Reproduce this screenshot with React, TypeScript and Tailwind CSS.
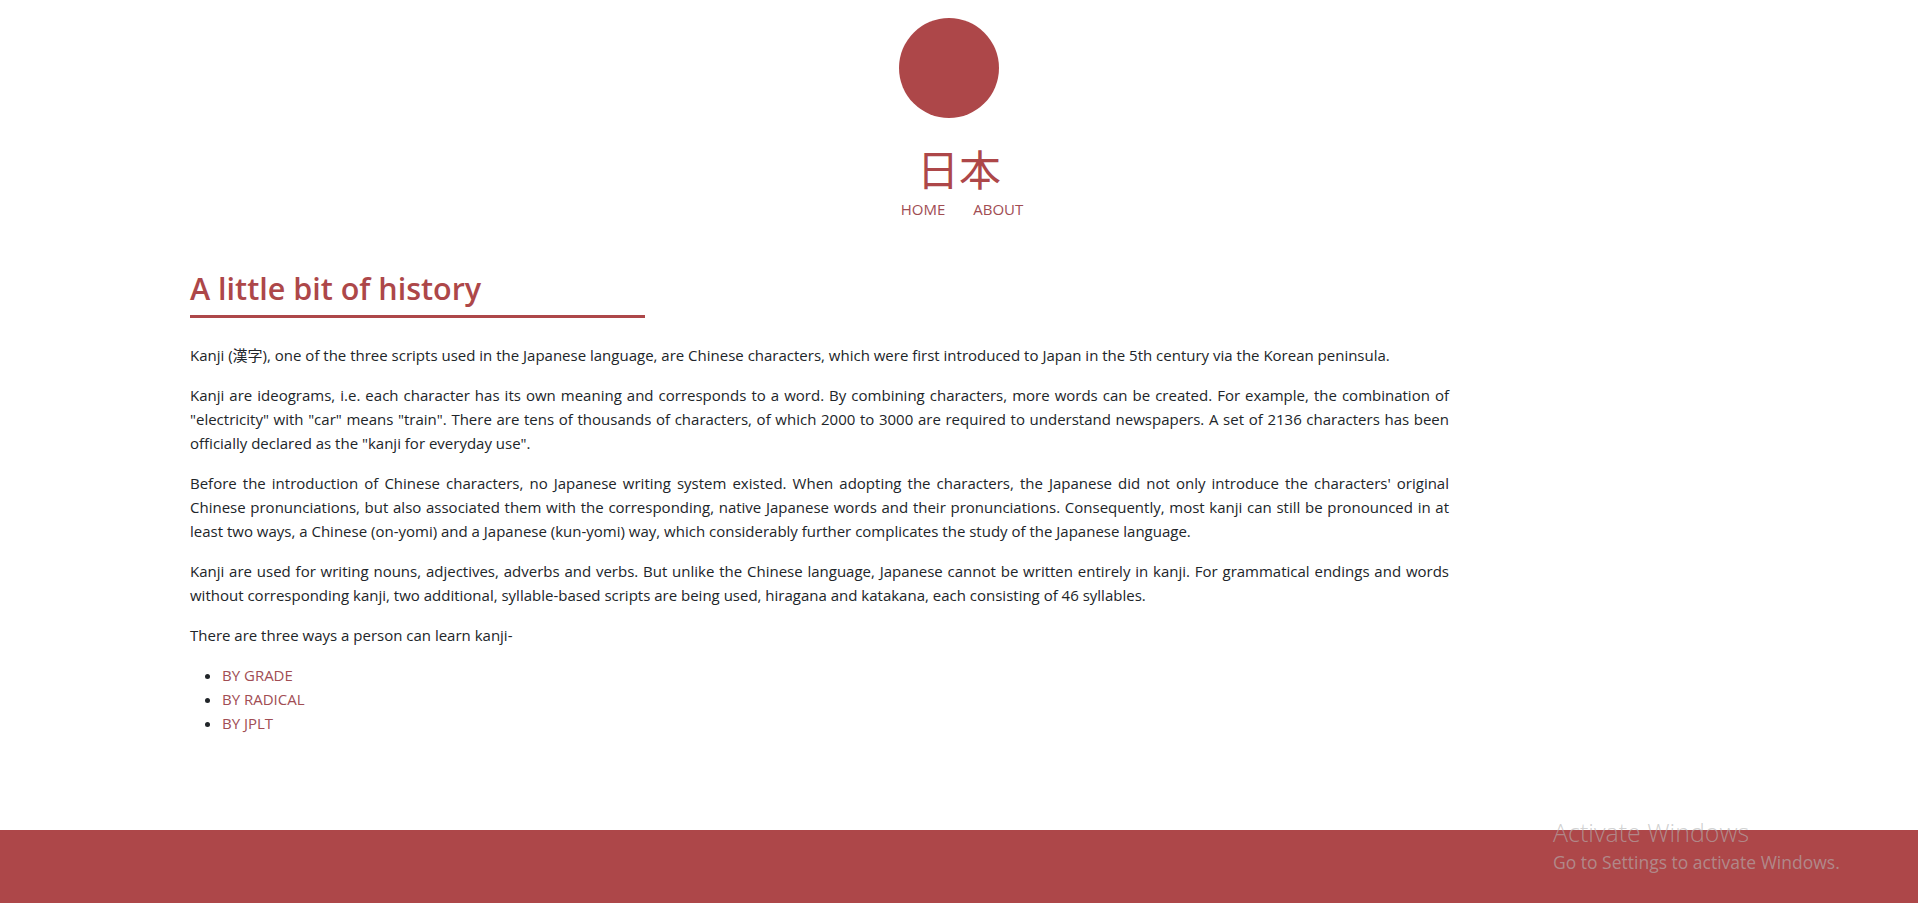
import React from "react";

const font = { fontFamily: '"Open Sans", "Noto Sans CJK JP", sans-serif' };

export default function App() {
  return (
    <div className="relative min-h-[903px] bg-white flex flex-col text-[#212529]" style={font}>
      <header className="flex flex-col items-center pt-[18px]">
        <div className="w-[100px] h-[100px] rounded-full bg-[#ad4749] mr-[20px]" />
        <h1 className="mt-[26px] text-[42px] leading-[48px] text-[#ad4749] font-normal" style={{ fontFamily: '"Noto Sans CJK JP", sans-serif' }}>
          日本
        </h1>
        <nav className="flex gap-[28px] text-[15px] leading-[20px] text-[#a14d53] mt-[7px] ml-[6px]">
          <a href="#">HOME</a>
          <a href="#">ABOUT</a>
        </nav>
      </header>

      <main className="ml-[190px] w-[1259px] mt-[49px] flex-1">
        <h2 className="text-[30.5px] leading-[40px] font-semibold text-[#ad4749]">A little bit of history</h2>
        <div className="w-[455px] border-b-[3px] border-[#ad4749] mt-[7px]" />
        <div className="mt-[25px] text-[15px] leading-6 text-justify flex flex-col gap-4">
          <p>
            Kanji (漢字), one of the three scripts used in the Japanese language, are Chinese characters, which were first introduced to Japan in the 5th century via the Korean peninsula.
          </p>
          <p>
            Kanji are ideograms, i.e. each character has its own meaning and corresponds to a word. By combining characters, more words can be created. For example, the combination of "electricity" with "car" means "train". There are tens of thousands of characters, of which 2000 to 3000 are required to understand newspapers. A set of 2136 characters has been officially declared as the "kanji for everyday use".
          </p>
          <p>
            Before the introduction of Chinese characters, no Japanese writing system existed. When adopting the characters, the Japanese did not only introduce the characters' original Chinese pronunciations, but also associated them with the corresponding, native Japanese words and their pronunciations. Consequently, most kanji can still be pronounced in at least two ways, a Chinese (on-yomi) and a Japanese (kun-yomi) way, which considerably further complicates the study of the Japanese language.
          </p>
          <p>
            Kanji are used for writing nouns, adjectives, adverbs and verbs. But unlike the Chinese language, Japanese cannot be written entirely in kanji. For grammatical endings and words without corresponding kanji, two additional, syllable-based scripts are being used, hiragana and katakana, each consisting of 46 syllables.
          </p>
          <p>There are three ways a person can learn kanji-</p>
          <ul className="list-disc pl-[32px] text-[#a14d53]">
            <li className="marker:text-[#212529]"><a href="#">BY GRADE</a></li>
            <li className="marker:text-[#212529]"><a href="#">BY RADICAL</a></li>
            <li className="marker:text-[#212529]"><a href="#">BY JPLT</a></li>
          </ul>
        </div>
      </main>

      <footer className="h-[73px] bg-[#ad4749]" />

      <div className="absolute left-[1553px] top-[817px] text-[rgba(180,180,180,0.62)] pointer-events-none">
        <div className="text-[25px] leading-[30px] font-light">Activate Windows</div>
        <div className="mt-[4px] text-[17.5px] leading-[22px]">Go to Settings to activate Windows.</div>
      </div>
    </div>
  );
}
